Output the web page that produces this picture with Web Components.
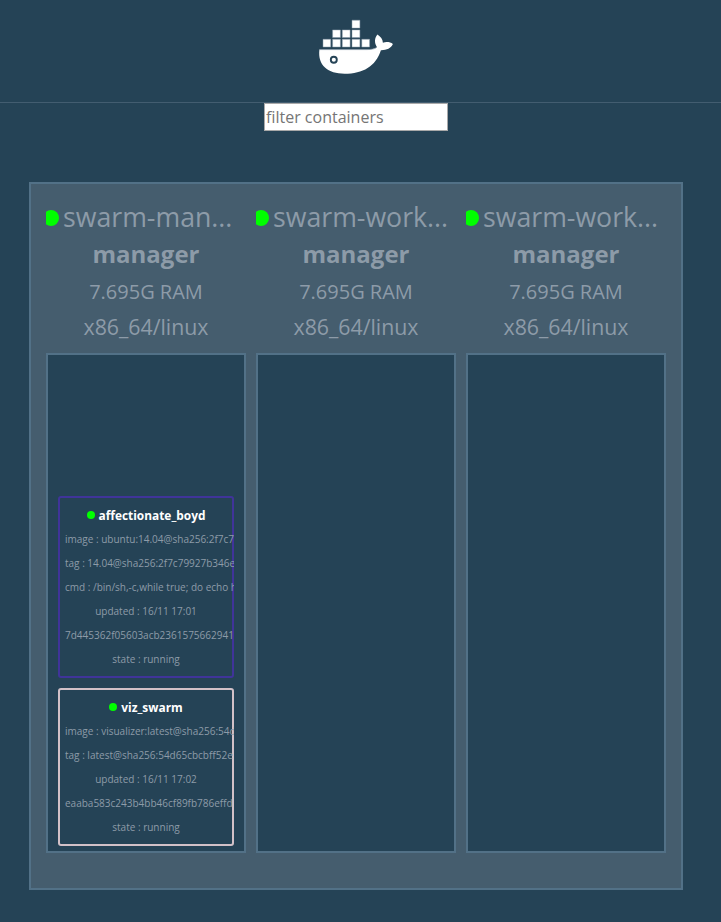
<!DOCTYPE html>
<html lang="en">
<head>
<meta charset="utf-8">
<title>Visualizer</title>
<style>
html, body { margin: 0; background: #254356; }
body { font-family: "Open Sans", sans-serif; color: #8d9ba8; }
</style>
</head>
<body>
<viz-app></viz-app>
<script>
const define = (name, html, setup) => customElements.define(name, class extends HTMLElement {
  constructor() {
    super();
    const t = document.createElement('template');
    t.innerHTML = html;
    this.attachShadow({ mode: 'open' }).append(t.content.cloneNode(true));
  }
  connectedCallback() { if (setup) setup(this, this.shadowRoot); }
});

define('status-dot', `<style>
:host { display: inline-block; flex: none; width: var(--dot, 8px); height: var(--dot, 8px); border-radius: 50%; background: #0f0; }
</style>`);

define('whale-logo', `<style>
:host { display: block; width: 78px; height: 58px; }
svg { display: block; }
</style>
<svg width="78" height="58" viewBox="317 18 78 58" fill="#fff">
  <g stroke="#8a9caa" stroke-width=".5">
    <path d="M352 20.2h7.900v7.900h-7.900zM332.600 29.900h7.800v7.700h-7.800zM342.300 29.900h7.800v7.700h-7.800zM352 29.900h7.900v7.700h-7.900zM323 39.300h7.700v7.700h-7.700zM332.600 39.300h7.800v7.700h-7.800zM342.300 39.300h7.800v7.700h-7.800zM352 39.300h7.900v7.700h-7.900zM361.800 39.300h7.800v7.700h-7.800z"/>
  </g>
  <path d="M319.4 49.5H367C371 49.5 374.500 48.700 377 47.200C374.300 43.400 374.300 38.300 377.400 34.600C380.600 36.600 382.800 39.300 382.900 42.700C386.300 41.600 390.300 42 392.900 44C391 48.200 386.500 50.300 380.900 50.200C375.600 66.500 363 73.700 344.600 73.700C328 73.700 317.500 65.500 319.400 49.500Z"/>
  <path d="M319.400 49.600H367C371 49.600 374 49 376 48" fill="none" stroke="#8a9caa" stroke-width=".7"/>
  <circle cx="333.800" cy="59.800" r="3" stroke="#254356" stroke-width="1.900"/>
</svg>`);

define('app-header', `<style>
:host { display: flex; justify-content: center; box-sizing: border-box; height: 103px; padding: 18px 9px 0 0; border-bottom: 1px solid #435d70; }
</style><slot></slot>`);

define('filter-box', `<style>
:host { display: flex; justify-content: center; padding-right: 9px; }
input { box-sizing: border-box; width: 184px; height: 28px; margin: 0; padding: 1px; border: 1px solid #a9a9a9; border-radius: 0; background: #fff; font: 16px/24px "Open Sans", sans-serif; }
input::placeholder { color: #757575; opacity: 1; }
</style><input type="text" placeholder="filter containers">`);

define('task-card', `<style>
:host { display: block; box-sizing: border-box; width: 176px; padding: 7px; border-radius: 3px; overflow: hidden; box-shadow: inset 0 0 0 2px var(--edge); font-size: 10px; line-height: 24px; white-space: nowrap; }
.name { display: flex; align-items: center; justify-content: center; gap: 4px; height: 24px; color: #fff; font-weight: 700; font-size: 11.9px; }
p { margin: 0; display: flex; justify-content: safe center; }
</style>
<div class="name"><status-dot></status-dot><span></span></div>`, (el, root) => {
  root.querySelector('span').textContent = el.getAttribute('name');
  for (const line of el.getAttribute('lines').split('|')) {
    const p = document.createElement('p');
    p.textContent = line;
    root.append(p);
  }
});

define('swarm-node', `<style>
:host { display: flex; flex-direction: column; width: 200px; }
.head { height: 154px; text-align: center; overflow: hidden; white-space: nowrap; }
.name { display: flex; align-items: center; gap: 4px; margin-left: -3px; height: 38px; font-size: 26.7px; line-height: 34px; --dot: 16px; }
.name span { padding-bottom: 3px; }
.role { font-weight: 700; font-size: 24px; line-height: 34px; }
.info { font-size: 20px; line-height: 36px; padding-top: 3px; }
.arch { font-size: 21.3px; line-height: 34px; }
.tasks { display: flex; flex-direction: column; justify-content: flex-end; gap: 10px; box-sizing: border-box; height: 500px; padding: 0 10px 5px; border: 2px solid #527187; background: #254356; }
</style>
<div class="head">
  <div class="name"><status-dot></status-dot><span></span></div>
  <div class="role">manager</div>
  <div class="info">7.695G RAM</div>
  <div class="arch">x86_64/linux</div>
</div>
<div class="tasks"><slot></slot></div>`, (el, root) => {
  root.querySelector('span').textContent = el.getAttribute('name');
});

define('swarm-cluster', `<style>
:host { display: flex; gap: 10px; box-sizing: border-box; width: 654px; height: 708px; margin: 51px 0 32px 29px; padding: 15px; border: 2px solid #527187; background: #455d6e; }
</style><slot></slot>`);

define('viz-app', `<style>:host { display: block; }</style>
<app-header><whale-logo></whale-logo></app-header>
<filter-box></filter-box>
<swarm-cluster>
  <swarm-node name="swarm-man...">
    <task-card style="--edge:#40349a" name="affectionate_boyd" lines="image : ubuntu:14.04@sha256:2f7c7|tag : 14.04@sha256:2f7c79927b346e|cmd : /bin/sh,-c,while true; do echo h|updated : 16/11 17:01|7d445362f05603acb2361575662941|state : running"></task-card>
    <task-card style="--edge:#d2c1c8" name="viz_swarm" lines="image : visualizer:latest@sha256:54d|tag : latest@sha256:54d65cbcbff52e|updated : 16/11 17:02|eaaba583c243b4bb46cf89fb786effd|state : running"></task-card>
  </swarm-node>
  <swarm-node name="swarm-work..."></swarm-node>
  <swarm-node name="swarm-work..."></swarm-node>
</swarm-cluster>`);
</script>
</body>
</html>
